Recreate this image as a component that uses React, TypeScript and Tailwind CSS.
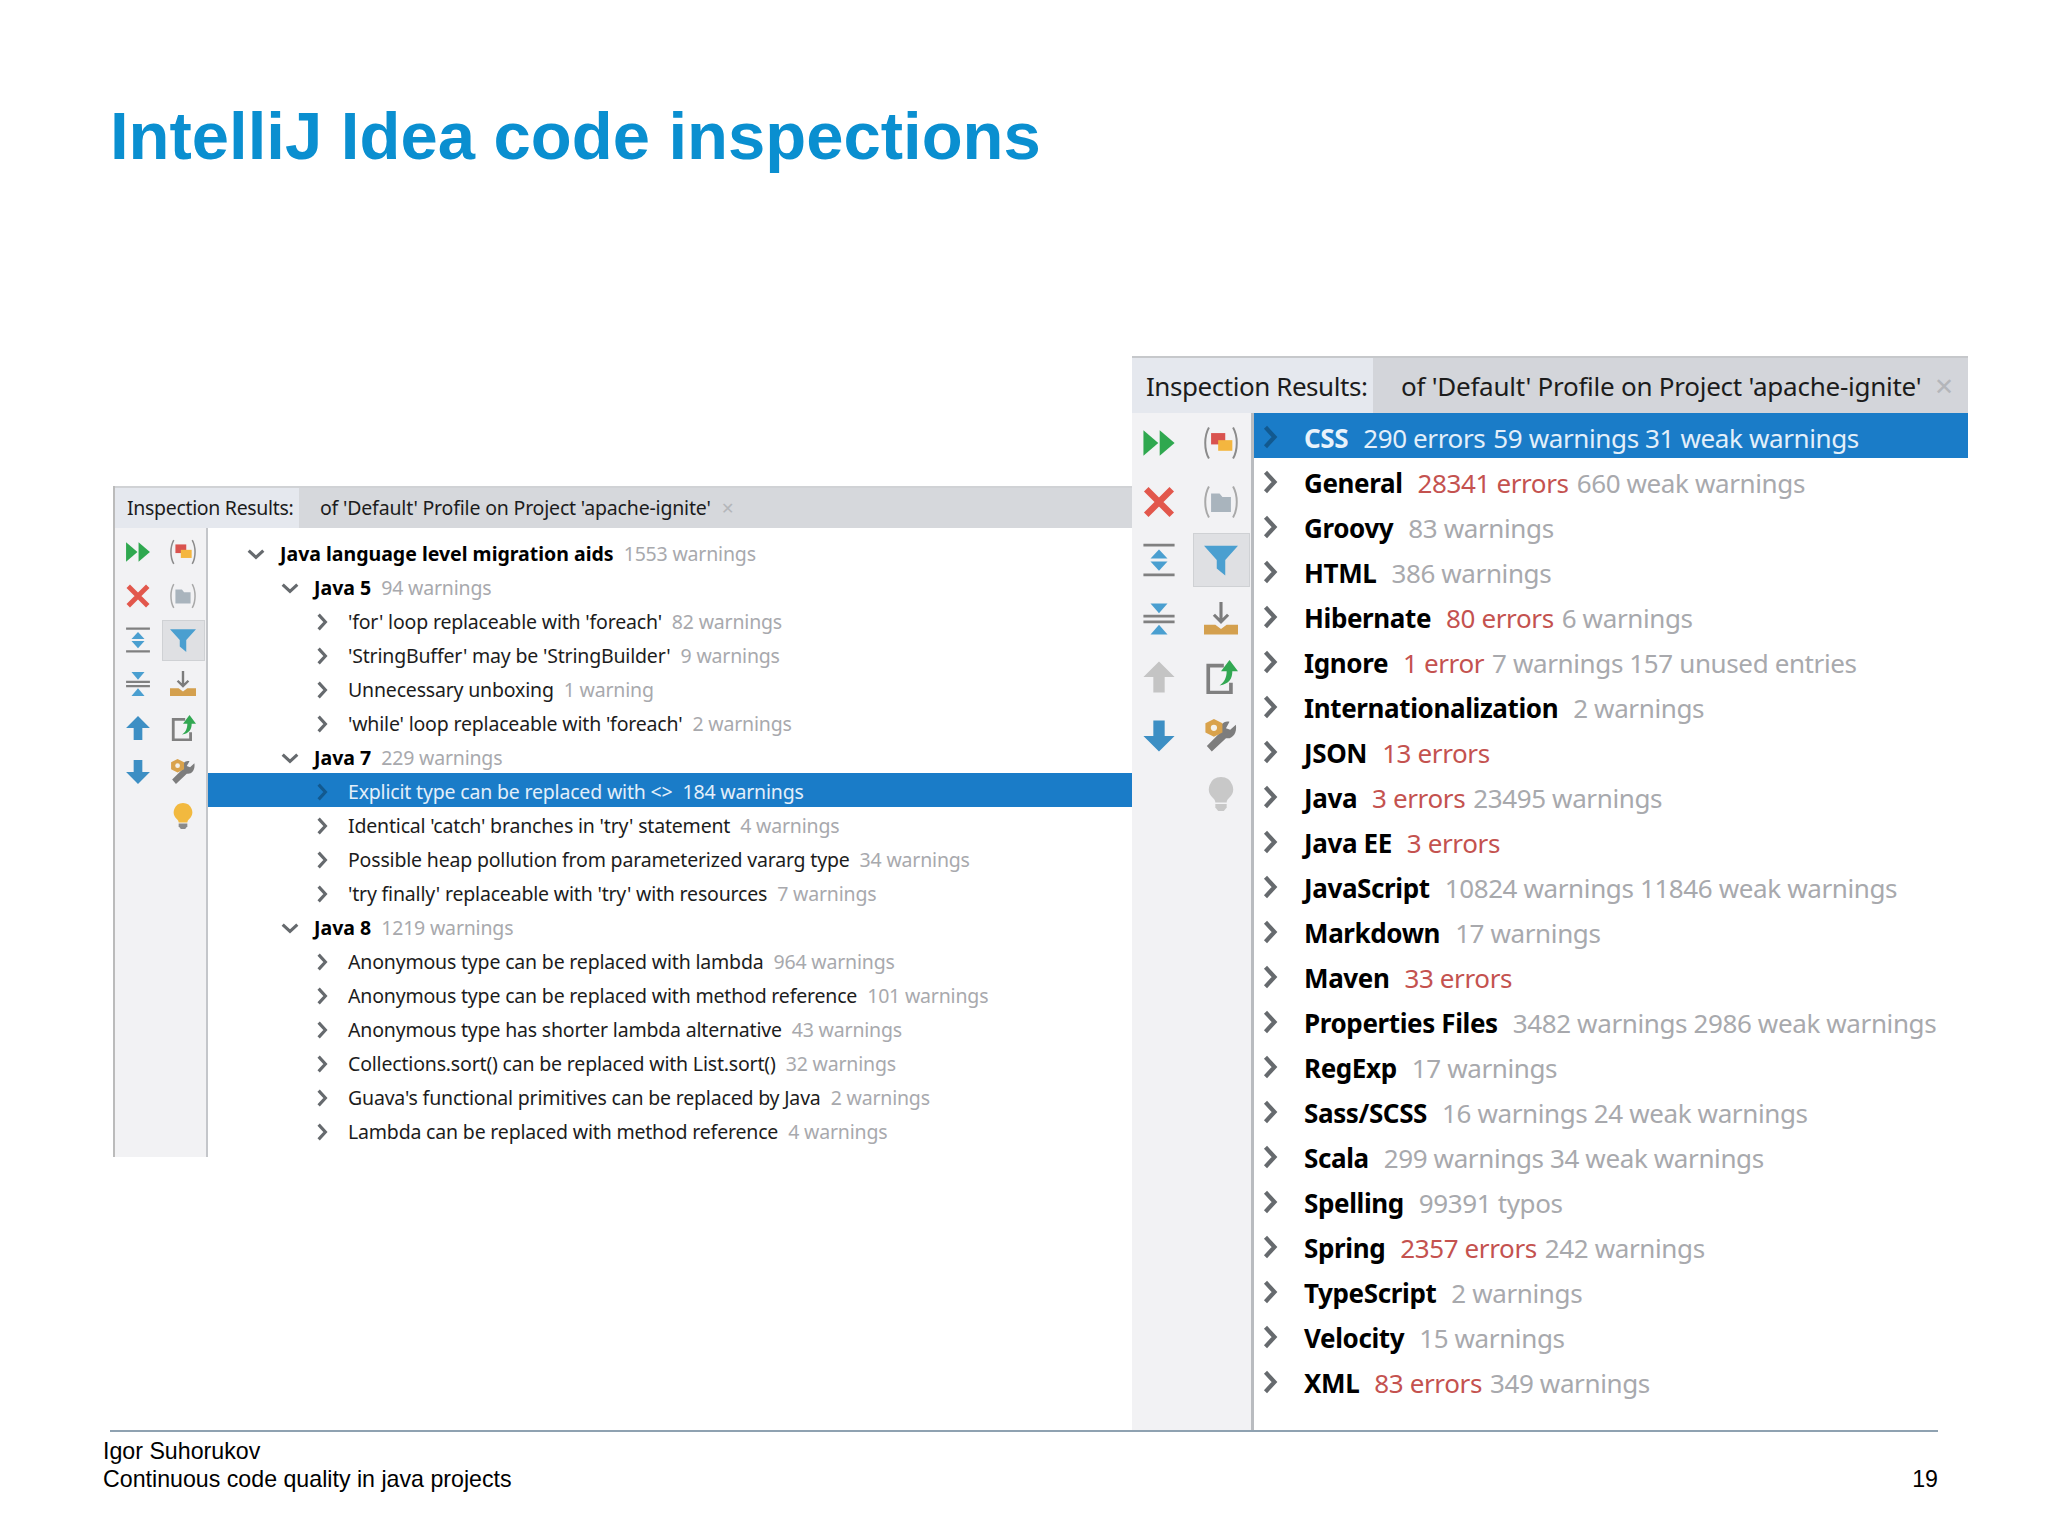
import React from 'react';

type TreeRow = { depth: 0 | 1 | 2; name: string; stats: string; open?: boolean; selected?: boolean };
type ProfileRow = { name: string; errors?: string; rest?: string; selected?: boolean };

const leftRows: TreeRow[] = [
  { depth: 0, name: 'Java language level migration aids', stats: '1553 warnings', open: true },
  { depth: 1, name: 'Java 5', stats: '94 warnings', open: true },
  { depth: 2, name: "'for' loop replaceable with 'foreach'", stats: '82 warnings' },
  { depth: 2, name: "'StringBuffer' may be 'StringBuilder'", stats: '9 warnings' },
  { depth: 2, name: 'Unnecessary unboxing', stats: '1 warning' },
  { depth: 2, name: "'while' loop replaceable with 'foreach'", stats: '2 warnings' },
  { depth: 1, name: 'Java 7', stats: '229 warnings', open: true },
  { depth: 2, name: 'Explicit type can be replaced with <>', stats: '184 warnings', selected: true },
  { depth: 2, name: "Identical 'catch' branches in 'try' statement", stats: '4 warnings' },
  { depth: 2, name: 'Possible heap pollution from parameterized vararg type', stats: '34 warnings' },
  { depth: 2, name: "'try finally' replaceable with 'try' with resources", stats: '7 warnings' },
  { depth: 1, name: 'Java 8', stats: '1219 warnings', open: true },
  { depth: 2, name: 'Anonymous type can be replaced with lambda', stats: '964 warnings' },
  { depth: 2, name: 'Anonymous type can be replaced with method reference', stats: '101 warnings' },
  { depth: 2, name: 'Anonymous type has shorter lambda alternative', stats: '43 warnings' },
  { depth: 2, name: 'Collections.sort() can be replaced with List.sort()', stats: '32 warnings' },
  { depth: 2, name: "Guava's functional primitives can be replaced by Java", stats: '2 warnings' },
  { depth: 2, name: 'Lambda can be replaced with method reference', stats: '4 warnings' },
];

const rightRows: ProfileRow[] = [
  { name: 'CSS', errors: '290 errors', rest: '59 warnings 31 weak warnings', selected: true },
  { name: 'General', errors: '28341 errors', rest: '660 weak warnings' },
  { name: 'Groovy', rest: '83 warnings' },
  { name: 'HTML', rest: '386 warnings' },
  { name: 'Hibernate', errors: '80 errors', rest: '6 warnings' },
  { name: 'Ignore', errors: '1 error', rest: '7 warnings 157 unused entries' },
  { name: 'Internationalization', rest: '2 warnings' },
  { name: 'JSON', errors: '13 errors' },
  { name: 'Java', errors: '3 errors', rest: '23495 warnings' },
  { name: 'Java EE', errors: '3 errors' },
  { name: 'JavaScript', rest: '10824 warnings 11846 weak warnings' },
  { name: 'Markdown', rest: '17 warnings' },
  { name: 'Maven', errors: '33 errors' },
  { name: 'Properties Files', rest: '3482 warnings 2986 weak warnings' },
  { name: 'RegExp', rest: '17 warnings' },
  { name: 'Sass/SCSS', rest: '16 warnings 24 weak warnings' },
  { name: 'Scala', rest: '299 warnings 34 weak warnings' },
  { name: 'Spelling', rest: '99391 typos' },
  { name: 'Spring', errors: '2357 errors', rest: '242 warnings' },
  { name: 'TypeScript', rest: '2 warnings' },
  { name: 'Velocity', rest: '15 warnings' },
  { name: 'XML', errors: '83 errors', rest: '349 warnings' },
];

function Chevron({ open, className }: { open?: boolean; className: string }) {
  return (
    <svg viewBox="0 0 16 16" className={className} fill="none" stroke="currentColor" strokeWidth="2.8">
      <path d={open ? 'M1.5 5l6.5 6 6.5-6' : 'M5 1.5l6 6.5-6 6.5'} />
    </svg>
  );
}

function Icon({ name, dim }: { name: string; dim?: boolean }) {
  const size = dim ? 'w-[34px] h-[34px]' : 'w-[26px] h-[26px]';
  return (
    <svg viewBox="0 0 24 24" className={size} fill="none">
      {name === 'run' && (
        <g fill="#2fa84f">
          <path d="M1 3l10.5 9L1 21z" />
          <path d="M12.5 3L23 12l-10.5 9z" />
        </g>
      )}
      {name === 'errors' && (
        <g>
          <path d="M3.5 1C0 7 0 17 3.5 23M20.5 1c3.5 6 3.5 16 0 22" stroke="#8b8b8b" strokeWidth="1.4" />
          <rect x="5" y="5" width="10" height="8" fill="#d9534f" />
          <rect x="10" y="10" width="10" height="7.5" fill="#f4b63f" />
        </g>
      )}
      {name === 'stop' && <path d="M3 3l18 18M21 3L3 21" stroke="#e2574c" strokeWidth="4.5" />}
      {name === 'folder' && (
        <g>
          <path d="M3.5 1C0 7 0 17 3.5 23M20.5 1c3.5 6 3.5 16 0 22" stroke="#a9a9a9" strokeWidth="1.4" />
          <path d="M5 6h6l2 2.5h6V19H5z" fill="#a9b4bd" />
        </g>
      )}
      {name === 'expand' && (
        <g>
          <path d="M1 1.5h22M1 22.5h22" stroke="#808080" strokeWidth="2" />
          <path d="M12 4.5l6 6.5H6z" fill="#4a9fd0" />
          <path d="M12 19.5L18 13H6z" fill="#4a9fd0" />
        </g>
      )}
      {name === 'collapse' && (
        <g>
          <path d="M1 10h22M1 14h22" stroke="#808080" strokeWidth="2" />
          <path d="M12 8L6 1h12z" fill="#4a9fd0" />
          <path d="M12 16l6 7H6z" fill="#4a9fd0" />
        </g>
      )}
      {name === 'filter' && <path d="M0 2h24l-9 10v11l-6-5v-6z" fill="#4a9fd0" />}
      {name === 'export' && (
        <g>
          <path d="M12 0v14M7 9l5 5 5-5" stroke="#7c7c7c" strokeWidth="2.2" />
          <path d="M0 16h8l4 3 4-3h8v7H0z" fill="#d4a04e" />
        </g>
      )}
      {name === 'up' && <path d="M12 1l11 11h-7v11H8V12H1z" fill={dim ? '#c4c4c4' : '#3d8fc4'} />}
      {name === 'down' && <path d="M12 23L1 12h7V1h8v11h7z" fill="#3d8fc4" />}
      {name === 'share' && (
        <g>
          <path d="M14 4H3v19h16v-7" stroke="#808080" strokeWidth="2.6" />
          <path d="M18 0l6 8h-4c0 5-2 9-9 10 3-2 5-5 5-10h-4z" fill="#32a852" />
        </g>
      )}
      {name === 'tools' && (
        <g>
          <path d="M22.5 4l-4 3.5-3-1 2.5-4.5c-4-1-7.5 2.500-6 7L2 19l3.5 4 10-9.500c4.5 1 8-3.500 7-9.500z" fill="#7d7d7d" />
          <path d="M7 0l6 3v6.500l-6 3-6-3V3z" fill="#d9a24b" />
          <circle cx="7" cy="6.2" r="2.2" fill="#f4f1ea" />
        </g>
      )}
      {name === 'bulb' && (
        <g>
          <path d="M12 0a8.5 8.5 0 0 0-5.500 15c1 1 1.500 2 1.500 3h8c0-1 .5-2 1.500-3A8.500 8.500 0 0 0 12 0z" fill={dim ? '#c8c8c8' : '#f2b93f'} />
          <path d="M8 19h8v2.500L14 24h-4l-2-2.500z" fill={dim ? '#c8c8c8' : '#8a8a8a'} />
        </g>
      )}
    </svg>
  );
}

const leftIcons = ['run', 'errors', 'stop', 'folder', 'expand', 'filter', 'collapse', 'export', 'up', 'share', 'down', 'tools', '', 'bulb'];

function Toolbar({ big }: { big?: boolean }) {
  return (
    <div
      className={
        big
          ? 'w-[122px] shrink-0 bg-[#f2f2f4] border-r-[3px] border-[#b9bcc0] grid grid-cols-[54px_62px] gap-x-[4px] auto-rows-[58.5px] content-start pt-px'
          : 'w-[93px] shrink-0 bg-[#f2f2f4] border-r-2 border-[#c4c6ca] grid grid-cols-[45px_46px] auto-rows-[44px] content-start pt-[2px]'
      }
    >
      {leftIcons.map((name, i) => (
        <div key={i} className="flex items-center justify-center">
          {name === 'filter' ? (
            <div
              className={
                big
                  ? 'w-[57px] h-[54px] flex items-center justify-center bg-[#dfe0e3] border border-[#cfd1d4]'
                  : 'w-[43px] h-[41px] flex items-center justify-center bg-[#dfe0e3] border border-[#cfd1d4]'
              }
            >
              <Icon name={name} dim={big} />
            </div>
          ) : name ? (
            <Icon name={name} dim={big} />
          ) : null}
        </div>
      ))}
    </div>
  );
}

function Header({ big }: { big?: boolean }) {
  const tabText = "of 'Default' Profile on Project 'apache-ignite'";
  if (big) {
    return (
      <div className="flex h-[57px] border-t-2 border-[#c6c8cb] text-[26px] text-[#1c1c1c] leading-none">
        <div className="w-[241px] shrink-0 bg-[#e5e8ee] flex items-center pl-[14px] whitespace-nowrap tracking-[-0.45px]">Inspection Results:</div>
        <div className="flex-1 min-w-0 bg-[#d3d5da] flex items-center pl-[28px] whitespace-nowrap tracking-[-0.25px]">
          <span>{tabText}</span>
          <span className="ml-auto mr-[14px] text-[#b4b6ba] text-[24px]">✕</span>
        </div>
      </div>
    );
  }
  return (
    <div className="flex h-[42px] border-t-2 border-[#d0d2d5] text-[19.5px] text-[#1c1c1c] leading-none">
      <div className="w-[184px] shrink-0 bg-[#e5e8ee] flex items-center pl-[12px] whitespace-nowrap tracking-[-0.32px]">Inspection Results:</div>
      <div className="flex-1 min-w-0 bg-[#d6d8dc] flex items-center pl-[21px] whitespace-nowrap tracking-[-0.18px]">
        <span>{tabText}</span>
        <span className="ml-[10px] text-[#b4b6ba] text-[16px]">✕</span>
      </div>
    </div>
  );
}

function LeftRow({ row }: { row: TreeRow }) {
  const pad = row.depth === 0 ? 'pl-[39px]' : row.depth === 1 ? 'pl-[73px]' : 'pl-[105px]';
  return (
    <div className={`h-[34px] flex items-center whitespace-nowrap text-[19.5px] pt-[3px] ${pad} ${row.selected ? 'bg-[#1a7cc8]' : ''}`}>
      <div className={`${row.depth === 2 ? 'w-[35px]' : 'w-[33px]'} shrink-0 ${row.selected ? 'text-[#12598f]' : 'text-[#666a6e]'}`}>
        <Chevron open={row.open} className="w-[18px] h-[18px]" />
      </div>
      <span className={row.selected ? 'text-[#e3effa] tracking-[-0.18px]' : row.depth < 2 ? 'font-bold text-black' : 'text-[#1c1c1c] tracking-[-0.18px]'}>{row.name}</span>
      <span className={`ml-[10px] tracking-[-0.18px] ${row.selected ? 'text-[#e3effa]' : 'text-[#a8a9ad]'}`}>{row.stats}</span>
    </div>
  );
}

function RightRow({ row }: { row: ProfileRow }) {
  return (
    <div className={`h-[45px] flex items-center whitespace-nowrap text-[26px] tracking-[-0.38px] pt-[5px] pl-[4px] ${row.selected ? 'bg-[#1a7cc8]' : ''}`}>
      <div className={`w-[46px] shrink-0 ${row.selected ? 'text-[#12598f]' : 'text-[#666a6e]'}`}>
        <Chevron className="w-[24px] h-[24px] -mt-[3px]" />
      </div>
      <span className={row.selected ? 'font-bold text-[#e8f2fb]' : 'font-bold text-black'}>{row.name}</span>
      {row.errors && <span className={`ml-[15px] ${row.selected ? 'text-[#e3effa]' : 'text-[#c4524f]'}`}>{row.errors}</span>}
      {row.rest && (
        <span className={`${row.errors ? 'ml-[8px]' : 'ml-[15px]'} ${row.selected ? 'text-[#e3effa]' : 'text-[#a8a9ad]'}`}>{row.rest}</span>
      )}
    </div>
  );
}

export default function App() {
  return (
    <div className="w-[2048px] h-[1540px] bg-white flex flex-col overflow-hidden font-['Liberation_Sans',sans-serif]">
      <div className="h-[356px] shrink-0 pl-[110px] pt-[93px]">
        <h1 className="text-[67px] leading-[86px] font-bold text-[#0a8fd0]">IntelliJ Idea code inspections</h1>
      </div>

      <div className="flex flex-1 min-h-0 pl-[113px] items-start font-['Noto_Sans',sans-serif]">
        <div className="w-[1019px] h-[671px] mt-[130px] shrink-0 flex flex-col border-l-2 border-[#bbbbbb]">
          <Header />
          <div className="flex flex-1 min-h-0">
            <Toolbar />
            <div className="flex-1 pt-[7px] min-w-0">
              {leftRows.map((row) => (
                <LeftRow key={row.name} row={row} />
              ))}
            </div>
          </div>
        </div>

        <div className="w-[836px] h-[1074px] shrink-0 flex flex-col">
          <Header big />
          <div className="flex flex-1 min-h-0">
            <Toolbar big />
            <div className="flex-1 min-w-0">
              {rightRows.map((row) => (
                <RightRow key={row.name} row={row} />
              ))}
            </div>
          </div>
        </div>
      </div>

      <div className="h-[110px] shrink-0 ml-[110px] w-[1828px] border-t-2 border-[#8fa2b1] text-[23.2px] leading-[28px] text-black pt-[5px]">
        <div className="-ml-[7px]">Igor Suhorukov</div>
        <div className="flex justify-between -ml-[7px]">
          <span>Continuous code quality in java projects</span>
          <span>19</span>
        </div>
      </div>
    </div>
  );
}
